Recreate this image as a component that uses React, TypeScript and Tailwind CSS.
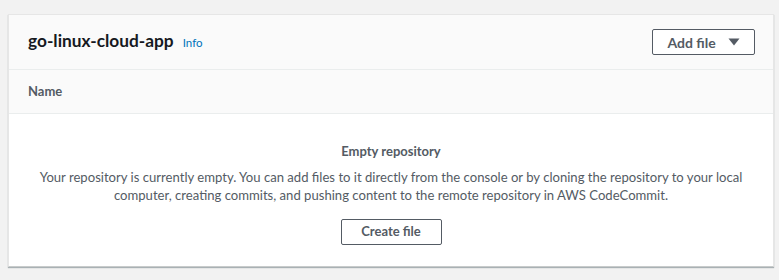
import React from 'react'

const Caret: React.FC = () => (
  <svg width="12" height="8" viewBox="0 0 12 8" className="ml-3">
    <path d="M0.5 0.5 H11.5 L6 7.5 Z" fill="#545b64" />
  </svg>
)

export default function App() {
  return (
    <div className="w-[779px] h-[280px] bg-[#f2f2f2] pt-[14px] pl-[8px] pr-[5px] font-['Lato',sans-serif]">
      <div className="bg-white border border-[#e6e6e6] border-b-[#c8cbcb] shadow-[0_1px_1px_rgba(0,28,36,0.3)]">
        {/* Header */}
        <div className="h-[55px] bg-[#fafafa] border-b border-[#eaeded] flex items-center justify-between pl-[19px] pr-[18px]">
          <div className="flex items-baseline gap-[9px] -mt-[2px]">
            <h1 className="text-[17.3px] font-bold text-[#16191f] leading-[22px]">go-linux-cloud-app</h1>
            <span className="text-[11.5px] text-[#0073bb]">Info</span>
          </div>
          <button className="h-[26px] w-[103px] border border-[#545b64] rounded-[2px] bg-white flex items-center justify-center text-[14px] font-bold text-[#545b64]">
            Add file
            <Caret />
          </button>
        </div>

        {/* Column header */}
        <div className="h-[44px] bg-[#fafafa] border-b border-[#eaeded] flex items-center pl-[19px]">
          <span className="text-[13px] font-bold text-[#545b64]">Name</span>
        </div>

        {/* Empty state */}
        <div className="flex flex-col items-center text-center pt-[27px] pb-[21px]">
          <div className="text-[13px] font-bold text-[#545b64] leading-[20px]">Empty repository</div>
          <p className="mt-[7px] text-[13.1px] text-[#545b64] leading-[18px] whitespace-nowrap">
            Your repository is currently empty. You can add files to it directly from the console or by cloning the repository to your local
            <br />
            computer, creating commits, and pushing content to the remote repository in AWS CodeCommit.
          </p>
          <button className="mt-[15px] h-[26px] w-[101px] border border-[#545b64] rounded-[2px] bg-white text-[13px] font-bold text-[#545b64]">
            Create file
          </button>
        </div>
      </div>
    </div>
  )
}
